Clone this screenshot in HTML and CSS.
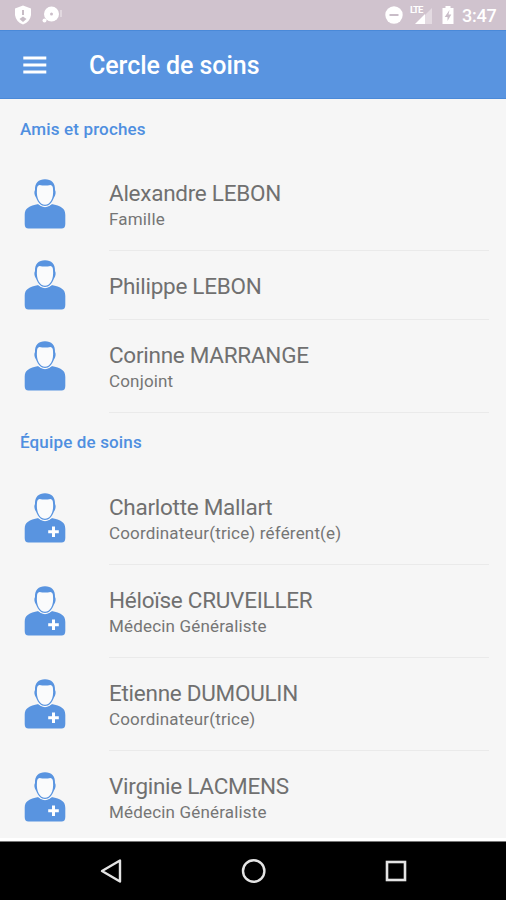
FILE: index.html
```html
<!DOCTYPE html>
<html lang="fr">
<head>
<meta charset="utf-8">
<title>Cercle de soins</title>
<link rel="stylesheet" href="styles.css">
</head>
<body>
<svg class="defs" aria-hidden="true">
  <symbol id="person" viewBox="0 0 42 50">
    <path fill="#5994e0" d="M.7 45V36C.7 29 5 27 14.500 25Q21 31 27.500 25C37 27 41.300 29 41.300 36V45Q41.300 49.500 37.500 49.500H4.500Q.7 49.500 .7 45Z"/>
    <path fill="#fafbfc" d="M14 22.500V25Q21 31.500 28 25V22.500Z"/>
    <path fill="#5994e0" d="M11 11C10.700 4 14.500.3 21 .3S31.300 4 31 11C32.300 13 31.500 16.500 30 18.500C28 23.500 25 27 21 27S14 23.500 12 18.500C10.500 16.500 9.700 13 11 11Z"/>
    <path fill="#fafbfc" d="M13 10Q13 6.500 15.500 6Q21 7 26.500 6Q29 6.500 29 10C30 19.500 26 25.800 21 25.800S12 19.500 13 10Z"/>
  </symbol>
  <symbol id="carer" viewBox="0 0 42 50">
    <use href="#person"/>
    <path stroke="#fff" stroke-width="3" d="M24.200 38.700H34.800M29.500 33.400V44"/>
  </symbol>
</svg>
<div class="status">
  <svg class="shield" width="18" height="20" viewBox="0 0 18 20"><path fill="#fff" d="M9 .5L17 3.500V10Q16 17 9 19.500Q2 17 1 10V3.500Z"/><path stroke="#c8bdc6" stroke-width="2" d="M9 5V10"/><path fill="#c8bdc6" d="M9 11.500l3.500 2.500L9 17l-3.500-3Z"/></svg>
  <svg class="alert" width="21" height="18" viewBox="0 0 21 18"><circle cx="9.500" cy="8" r="7.500" fill="#fff"/><circle cx="9.500" cy="8" r="1.500" fill="#cbbec9"/><circle cx="2.500" cy="14.500" r="2" fill="#fff"/><path stroke="#e7dfe5" stroke-width="1.500" d="M19 4V11"/></svg>
  <svg class="dnd" width="18" height="18" viewBox="0 0 18 18"><circle cx="9" cy="9" r="8.700" fill="#fff"/><path stroke="#c9bdc8" stroke-width="2" d="M4.500 9H13.500"/></svg>
  <span class="signal"><span class="lte">LTE</span><svg width="18" height="17" viewBox="0 0 18 17"><path fill="#e3dae1" d="M1 17L17 1V17Z"/><path fill="#fff" d="M0 17L10 7V17Z"/></svg></span>
  <svg class="battery" width="12" height="18" viewBox="0 0 12 18"><path fill="#fff" d="M3.500 0H8.500V2H11.500V18H.5V2H3.500Z"/><path fill="#c9bdc8" d="M7.500 4L2.700 11H5.500V15L9.300 8.500H6.500Z"/></svg>
  <time>3:47</time>
</div>
<header class="bar">
  <svg width="24" height="18" viewBox="0 0 24 18"><path stroke="#fff" stroke-width="2.800" d="M.3 2H23.300M.3 9H23.300M.3 16H23.300"/></svg>
  <h1>Cercle de soins</h1>
</header>
<main>
  <h2 class="first">Amis et proches</h2>
  <ul>
    <li><svg class="avatar"><use href="#person"/></svg><div class="info"><p class="name">Alexandre LEBON</p><p class="role">Famille</p></div></li>
    <li class="single"><svg class="avatar"><use href="#person"/></svg><div class="info"><p class="name">Philippe LEBON</p></div></li>
    <li><svg class="avatar"><use href="#person"/></svg><div class="info"><p class="name">Corinne MARRANGE</p><p class="role">Conjoint</p></div></li>
  </ul>
  <h2>Équipe de soins</h2>
  <ul>
    <li><svg class="avatar"><use href="#carer"/></svg><div class="info"><p class="name">Charlotte Mallart</p><p class="role">Coordinateur(trice) référent(e)</p></div></li>
    <li><svg class="avatar"><use href="#carer"/></svg><div class="info"><p class="name">Héloïse CRUVEILLER</p><p class="role">Médecin Généraliste</p></div></li>
    <li><svg class="avatar"><use href="#carer"/></svg><div class="info"><p class="name">Etienne DUMOULIN</p><p class="role">Coordinateur(trice)</p></div></li>
    <li><svg class="avatar"><use href="#carer"/></svg><div class="info"><p class="name">Virginie LACMENS</p><p class="role">Médecin Généraliste</p></div></li>
  </ul>
</main>
<nav>
  <svg width="24" height="26" viewBox="0 0 24 26"><path fill="none" stroke="#e4e4e4" stroke-width="2.400" stroke-linejoin="round" d="M21 2.500V23.500L3 13Z"/></svg>
  <svg width="26" height="26" viewBox="0 0 26 26"><circle cx="12.700" cy="13" r="10.700" fill="none" stroke="#e4e4e4" stroke-width="2.400"/></svg>
  <svg width="24" height="26" viewBox="0 0 24 26"><rect x="3" y="4" width="18" height="18" fill="none" stroke="#e4e4e4" stroke-width="2.600"/></svg>
</nav>
</body>
</html>
```

FILE: styles.css
```css
* { box-sizing: border-box; margin: 0; padding: 0; }
body {
  width: 506px;
  height: 900px;
  overflow: hidden;
  display: flex;
  flex-direction: column;
  background: #f6f6f6;
  font-family: Roboto, sans-serif;
}
.defs { position: absolute; width: 0; height: 0; }
svg { display: block; flex: none; }
.status {
  flex: none;
  height: 30px;
  padding: 0 9px 0 14px;
  display: flex;
  align-items: center;
  background: #d0c3ce;
  color: #fff;
}
.alert { margin-left: 10px; }
.dnd { margin-left: auto; }
.signal { display: flex; align-items: flex-end; width: 24px; height: 18px; margin-left: 7px; }
.lte { align-self: flex-start; width: 5px; font-size: 9.500px; line-height: 8px; font-weight: 700; letter-spacing: -1px; }
.battery { margin-left: 8px; }
.status time { width: 35px; margin-left: 8px; font-size: 18px; font-weight: 500; letter-spacing: -.2px; white-space: nowrap; }
.bar {
  flex: none;
  height: 69px;
  padding-left: 23px;
  display: flex;
  align-items: center;
  gap: 42px;
  background: #5994e0;
  border-top: 1px solid #4a89d8;
  border-bottom: 1px solid #4a89d8;
  color: #fff;
}
h1 { font-size: 25px; font-weight: 500; line-height: 30px; letter-spacing: -.05px; padding-top: 2px; }
main { height: 742px; overflow: hidden; flex: none; border-bottom: 3px solid #fff; }
h2 {
  height: 59px;
  padding-left: 20px;
  color: #4f8fe0;
  font-size: 17px;
  font-weight: 500;
  line-height: 59px;
  letter-spacing: .15px;
}
.first { line-height: 61px; }
ul { list-style: none; }
li { display: flex; align-items: center; height: 93px; padding-left: 24px; }
.single { height: 69px; }
.avatar { width: 42px; height: 50px; margin-bottom: 2px; }
.info {
  width: 380px;
  height: 100%;
  margin-left: 43px;
  padding-top: 2px;
  display: flex;
  flex-direction: column;
  justify-content: center;
  border-bottom: 1px solid #eaeaea;
}
.name { color: #707070; font-size: 22.500px; line-height: 28px; letter-spacing: -.27px; }
.role { color: #757575; font-size: 17px; line-height: 24px; letter-spacing: .17px; }
nav {
  flex: none;
  height: 59px;
  padding: 0 98px 1px 99px;
  display: flex;
  align-items: center;
  justify-content: space-between;
  background: #000;
  border-top: 1px solid #777;
}
```
